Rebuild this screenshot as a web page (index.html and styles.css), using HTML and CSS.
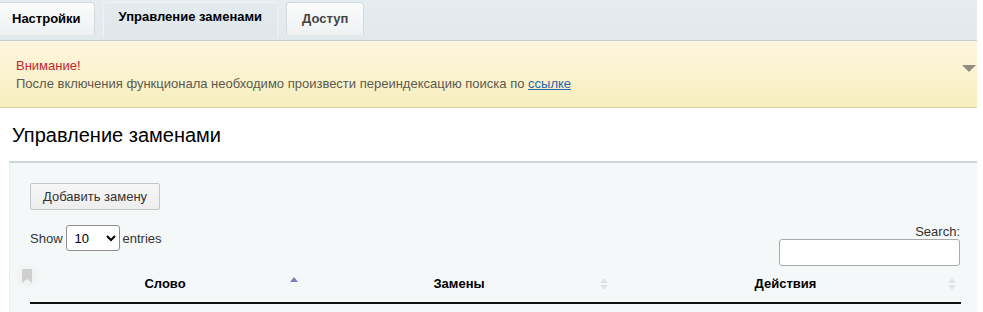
FILE: index.html
```html
<!DOCTYPE html>
<html lang="ru">
<head>
    <meta charset="UTF-8">
    <title>Управление заменами</title>
    <link rel="stylesheet" href="styles.css">
</head>
<body>
    <div class="page">
        <div class="tabs">
            <div class="tab">Настройки</div>
            <div class="tab tab-active">Управление заменами</div>
            <div class="tab tab-muted">Доступ</div>
        </div>
        <div class="notice">
            <div class="notice-title">Внимание!</div>
            <div class="notice-text">После включения функционала необходимо произвести переиндексацию поиска по <a href="#">ссылке</a></div>
            <span class="notice-arrow"></span>
        </div>
        <h2 class="title">Управление заменами</h2>
        <div class="panel">
            <button class="btn">Добавить замену</button>
            <div class="controls">
                <div class="length">
                    Show
                    <select>
                        <option>10</option>
                    </select>
                    entries
                </div>
                <div class="search">
                    <label>Search:</label>
                    <input type="text">
                </div>
            </div>
            <span class="bookmark">
                <svg width="12" height="16" viewBox="0 0 12 16"><path d="M1 1h10v14l-5-4-5 4z" fill="#cfcfcf"/></svg>
            </span>
            <table class="grid">
                <thead>
                    <tr>
                        <th class="col-word">Слово<span class="sort sort-asc"></span></th>
                        <th class="col-repl">Замены<span class="sort"></span></th>
                        <th class="col-act">Действия<span class="sort"></span></th>
                    </tr>
                </thead>
            </table>
        </div>
    </div>
</body>
</html>
```

FILE: styles.css
```css
body {
    margin: 0;
    font-family: "Liberation Sans", Arial, sans-serif;
    font-size: 13px;
    color: #000;
    background: #fff;
}
.page {
    width: 977px;
}
.tabs {
    display: flex;
    gap: 8px;
    height: 41px;
    padding-top: 2px;
    box-sizing: border-box;
    background: linear-gradient(#e6edf0, #e1e9ec);
    border-bottom: 1px solid #cbd0cf;
}
.tab {
    height: 33px;
    line-height: 31px;
    padding: 0 13px 0 12px;
    font-weight: bold;
    box-sizing: border-box;
    border: 1px solid #d3dadc;
    border-bottom: none;
    border-radius: 4px 4px 0 0;
    background: linear-gradient(#fbfcfc, #eef1f2);
}
.tab:first-child {
    border-left: none;
    border-radius: 0 4px 0 0;
}
.tab-active {
    background: linear-gradient(#e3ebee, #dfe7ea);
    border-color: #eef3f4;
    height: 36px;
    line-height: 28px;
    padding: 0 15px;
}
.tab-muted {
    color: #444;
    padding: 0 15px;
}
.notice {
    position: relative;
    height: 67px;
    box-sizing: border-box;
    padding: 16px 16px 0;
    background: linear-gradient(#fdf6de, #f8eebf);
    border-bottom: 1px solid #d9d2a6;
    line-height: 18px;
}
.notice-title {
    color: #c3272b;
}
.notice-text {
    color: #5b5a50;
}
.notice-text a {
    color: #2466b0;
}
.notice-arrow {
    position: absolute;
    right: 1px;
    top: 24px;
    border-left: 7px solid transparent;
    border-right: 7px solid transparent;
    border-top: 7px solid #8e8e86;
}
.title {
    margin: 0;
    padding: 15px 12px 14px;
    font-size: 20px;
    font-weight: normal;
    line-height: 24px;
}
.panel {
    position: relative;
    margin-left: 9px;
    padding: 20px 16px 0 20px;
    height: 151px;
    box-sizing: border-box;
    background: #f5f8f9;
    border-top: 2px solid #cfd6d8;
    border-left: 1px solid #e8eded;
}
.btn {
    font-family: inherit;
    font-size: 13px;
    color: #333;
    height: 27px;
    padding: 0 12px;
    background: linear-gradient(#f6f6f6, #eeeeee);
    border: 1px solid #c6c6c6;
    border-radius: 2px;
}
.controls {
    display: flex;
    justify-content: space-between;
    margin-top: 15px;
    height: 44px;
}
.length {
    display: flex;
    align-items: center;
    gap: 3px;
    height: 26px;
    color: #333;
}
.length select {
    width: 54px;
    height: 26px;
    font-family: inherit;
    font-size: 13px;
    padding: 0 4px;
    border: 1px solid #8f8f8f;
    border-radius: 3px;
    background: #fff;
}
.search {
    display: flex;
    flex-direction: column;
    align-items: flex-end;
    margin-top: -1px;
    margin-right: 1px;
    color: #333;
}
.search label {
    line-height: 15px;
    margin-bottom: 0;
}
.search input {
    width: 181px;
    height: 27px;
    box-sizing: border-box;
    border: 1px solid #aaa;
    border-radius: 3px;
    background: #fff;
}
.bookmark {
    position: absolute;
    left: 3px;
    top: 99px;
    width: 28px;
    height: 28px;
    border-radius: 50%;
    display: flex;
    align-items: center;
    justify-content: center;
    background: radial-gradient(#f1f3f3 40%, #f5f8f9 70%);
}
.grid {
    width: 931px;
    margin-top: -1px;
    border-collapse: collapse;
    table-layout: fixed;
}
.grid th {
    position: relative;
    height: 31px;
    padding: 0 18px 3px 10px;
    font-weight: bold;
    text-align: center;
    border-bottom: 2px solid #111;
}
.col-word {
    width: 250px;
}
.col-repl {
    width: 282px;
}
.sort {
    position: absolute;
    right: 10px;
    top: 10px;
    width: 0;
    height: 0;
    border-left: 4px solid transparent;
    border-right: 4px solid transparent;
    border-bottom: 5px solid #e0e3e4;
}
.sort::after {
    content: "";
    position: absolute;
    left: -4px;
    top: 7px;
    border-left: 4px solid transparent;
    border-right: 4px solid transparent;
    border-top: 5px solid #e0e3e4;
}
.sort-asc {
    top: 9px;
    border-bottom-color: #7b7fbf;
}
.sort-asc::after {
    display: none;
}
.col-act .sort {
    right: 5px;
}
```
